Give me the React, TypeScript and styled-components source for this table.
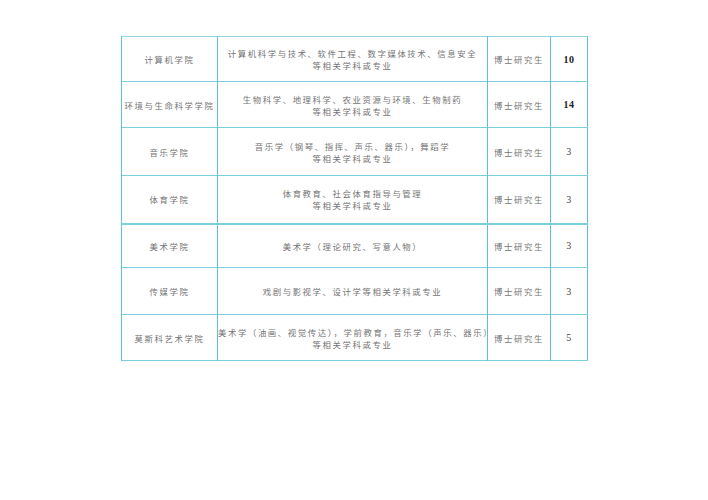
import React from "react";
import styled, { createGlobalStyle } from "styled-components";

const Global = createGlobalStyle`
  html, body {
    margin: 0;
    padding: 0;
    background: #ffffff;
  }
  body {
    font-family: "Noto Sans CJK SC", "Liberation Serif", serif;
  }
`;

const Page = styled.div`
  width: 708px;
  height: 500px;
  padding: 36px 0 0 121px;
  box-sizing: border-box;
`;

const Table = styled.table`
  border-collapse: collapse;
  table-layout: fixed;
  width: 466px;
  border-top: 1px solid #8fd6e0;
  border-left: 1px solid #9ad8e2;
  border-right: 1px solid #5fc0cf;
  border-bottom: 1px solid #d6eef2;
`;

const Col = styled.col<{ $w: number }>`
  width: ${(p) => p.$w}px;
`;

const Row = styled.tr<{ $h: number; $thick?: boolean }>`
  height: ${(p) => p.$h}px;
  border-bottom: ${(p) => (p.$thick ? "2px" : "1px")} solid #7ccfdc;
`;

const Cell = styled.td`
  border-left: 1px solid #5fc0cf;
  padding: 0;
  text-align: center;
  vertical-align: middle;
  font-size: 8.4px;
  line-height: 12px;
  letter-spacing: 1.6px;
  color: #747474;
  white-space: nowrap;
  overflow: visible;
`;

const Num = styled.span<{ $bold?: boolean }>`
  font-family: "Liberation Serif", "DejaVu Serif", serif;
  font-size: 10px;
  letter-spacing: 0.5px;
  font-weight: ${(p) => (p.$bold ? 700 : 400)};
  color: ${(p) => (p.$bold ? "#222" : "#444")};
`;

type Item = {
  school: string;
  major: string[];
  num: string;
  h: number;
  thick?: boolean;
  bold?: boolean;
};

const rows: Item[] = [
  {
    school: "计算机学院",
    major: ["计算机科学与技术、软件工程、数字媒体技术、信息安全", "等相关学科或专业"],
    num: "10",
    h: 45,
    bold: true,
  },
  {
    school: "环境与生命科学学院",
    major: ["生物科学、地理科学、农业资源与环境、生物制药", "等相关学科或专业"],
    num: "14",
    h: 46,
    bold: true,
  },
  {
    school: "音乐学院",
    major: ["音乐学（钢琴、指挥、声乐、器乐），舞蹈学", "等相关学科或专业"],
    num: "3",
    h: 48,
  },
  {
    school: "体育学院",
    major: ["体育教育、社会体育指导与管理", "等相关学科或专业"],
    num: "3",
    h: 48,
    thick: true,
  },
  {
    school: "美术学院",
    major: ["美术学（理论研究、写意人物）"],
    num: "3",
    h: 44,
  },
  {
    school: "传媒学院",
    major: ["戏剧与影视学、设计学等相关学科或专业"],
    num: "3",
    h: 47,
  },
  {
    school: "莫斯科艺术学院",
    major: ["美术学（油画、视觉传达），学前教育，音乐学（声乐、器乐）", "等相关学科或专业"],
    num: "5",
    h: 46,
  },
];

const App = () => {
  return (
    <>
      <Global />
      <Page>
        <Table>
          <colgroup>
            <Col $w={96} />
            <Col $w={270} />
            <Col $w={63} />
            <Col $w={37} />
          </colgroup>
          <tbody>
            {rows.map((r) => (
              <Row key={r.school} $h={r.h} $thick={r.thick}>
                <Cell>{r.school}</Cell>
                <Cell>
                  {r.major.map((m, i) => (
                    <div key={i}>{m}</div>
                  ))}
                </Cell>
                <Cell>博士研究生</Cell>
                <Cell>
                  <Num $bold={r.bold}>{r.num}</Num>
                </Cell>
              </Row>
            ))}
          </tbody>
        </Table>
      </Page>
    </>
  );
};

export default App;
